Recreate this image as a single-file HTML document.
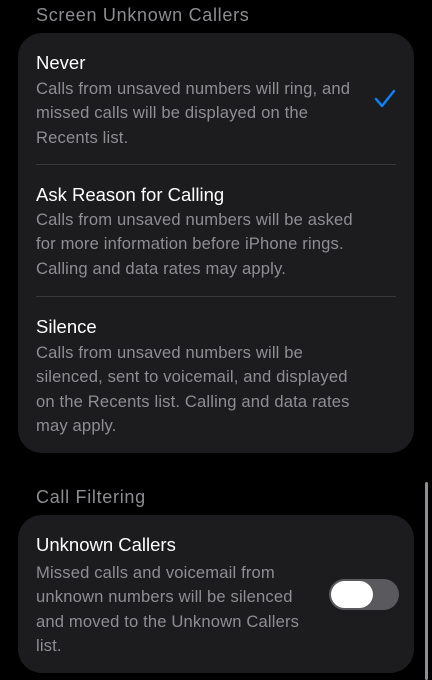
<!DOCTYPE html><html><head><style>
body{margin:0;width:432px;height:680px;background:#000;position:relative;overflow:hidden;font-family:"Liberation Sans",sans-serif;}
.a{position:absolute;white-space:nowrap}
.h{color:#8d8d92;font-size:18px;left:36px;letter-spacing:0.7px}
.t{color:#fff;font-size:18.5px;left:36px}
.d{color:#8e8e93;font-size:16.6px;left:36px;line-height:24.3px;letter-spacing:0.15px}
.card{position:absolute;left:18px;width:396px;background:#1c1c1e;border-radius:24px}
.div{position:absolute;left:36px;width:360px;height:1px;background:#38383a}
</style></head><body>
<div class="a h" style="top:5px">Screen Unknown Callers</div>
<div class="card" style="top:33px;height:420px"></div>
<div class="a t" style="top:52px">Never</div>
<div class="a d" style="top:77px">Calls from unsaved numbers will ring, and<br>missed calls will be displayed on the<br>Recents list.</div>
<svg class="a" style="left:374px;top:89px" width="22" height="20" viewBox="0 0 22 20"><path d="M2 10 L8 17 L20 2" fill="none" stroke="#0a84ff" stroke-width="2.4" stroke-linecap="round" stroke-linejoin="round"/></svg>
<div class="div" style="top:164px"></div>
<div class="a t" style="top:184px">Ask Reason for Calling</div>
<div class="a d" style="top:208px">Calls from unsaved numbers will be asked<br>for more information before iPhone rings.<br>Calling and data rates may apply.</div>
<div class="div" style="top:296px"></div>
<div class="a t" style="top:316px">Silence</div>
<div class="a d" style="top:341px">Calls from unsaved numbers will be<br>silenced, sent to voicemail, and displayed<br>on the Recents list. Calling and data rates<br>may apply.</div>
<div class="a h" style="top:487px">Call Filtering</div>
<div class="card" style="top:515px;height:158px"></div>
<div class="a t" style="top:534px">Unknown Callers</div>
<div class="a d" style="top:561px">Missed calls and voicemail from<br>unknown numbers will be silenced<br>and moved to the Unknown Callers<br>list.</div>
<div class="a" style="left:329px;top:579px;width:70px;height:31px;border-radius:16px;background:#5a5a5e"></div>
<div class="a" style="left:331px;top:581px;width:42px;height:27px;border-radius:14px;background:#fff"></div>
<div class="a" style="left:425px;top:482px;width:3px;height:198px;border-radius:2px;background:#8e8e93"></div>
</body></html>
